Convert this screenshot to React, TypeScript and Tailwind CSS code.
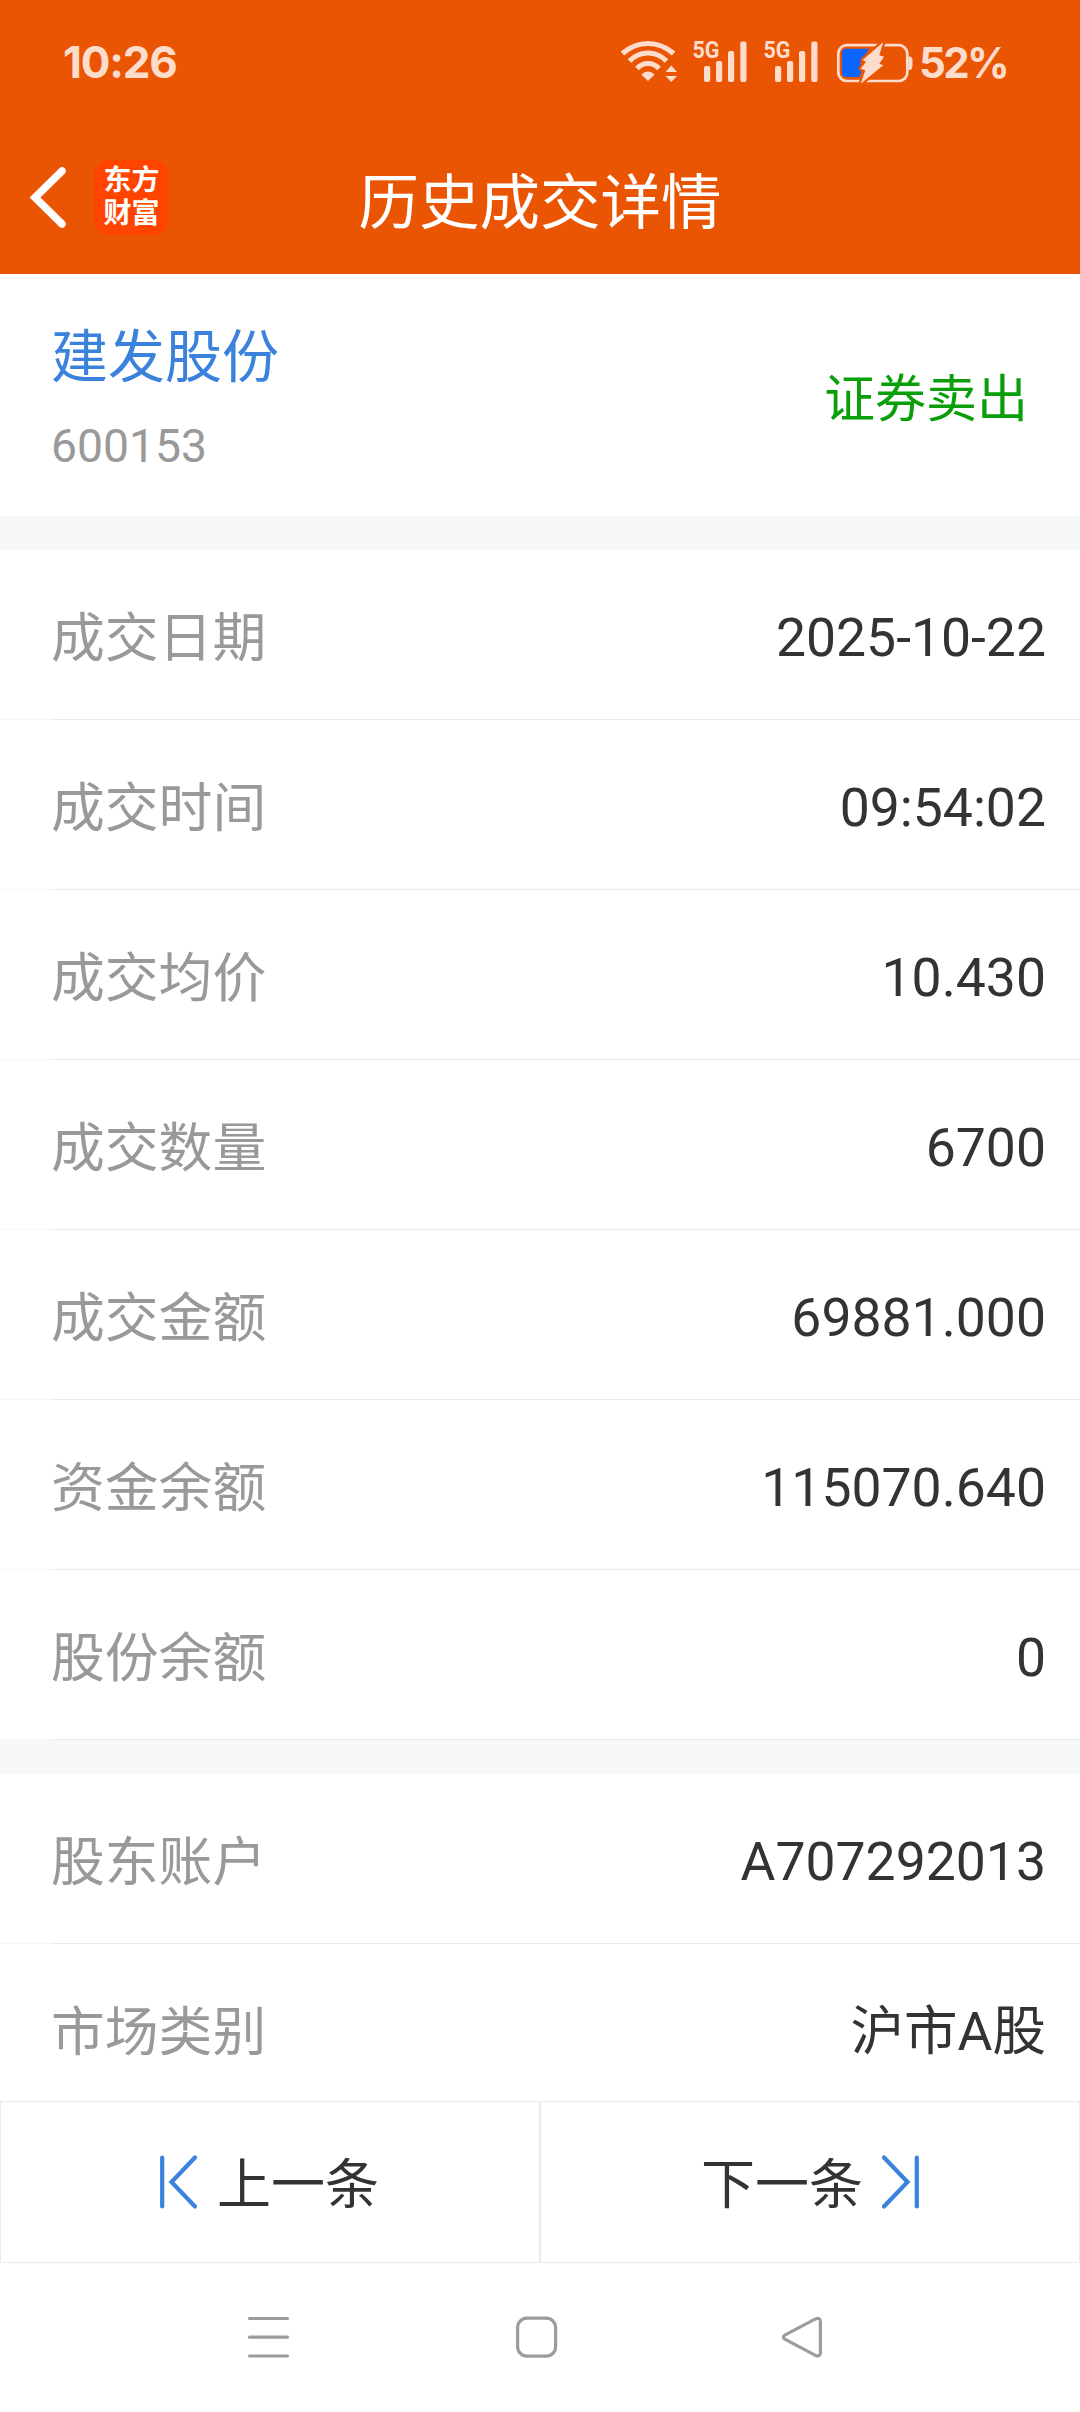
const details = [
  ['成交日期', '2025-10-22'],
  ['成交时间', '09:54:02'],
  ['成交均价', '10.430'],
  ['成交数量', '6700'],
  ['成交金额', '69881.000'],
  ['资金余额', '115070.640'],
  ['股份余额', '0'],
];

function Row({ label, value }: { label: string; value: string }) {
  return (
    <div className="relative flex h-[170px] shrink-0 items-start justify-between bg-white pl-[51px] pr-[34px] text-[53.5px] leading-[80px]">
      <span className="pt-[49px] text-[53.8px] text-[#999999]">{label}</span>
      <span className="pt-[48px] text-[#333333]">{value}</span>
      <div className="absolute bottom-0 left-0 h-px w-[51px] bg-[#f7f7f7]" />
      <div className="absolute right-0 bottom-0 left-[51px] h-px bg-[#ebebeb]" />
    </div>
  );
}

function Signal({ x }: { x: number }) {
  return (
    <g transform={`translate(${x} 0)`}>
      <text x="-0.5" y="19" fontSize="24" fontWeight="700" textLength="27" lengthAdjust="spacingAndGlyphs" fontFamily="Roboto, sans-serif">5G</text>
      <rect x="11" y="27" width="6.2" height="16" rx="2" />
      <rect x="23" y="22" width="6.2" height="21" rx="2" />
      <rect x="35" y="12" width="6.2" height="31" rx="2" />
      <rect x="47.3" y="2.5" width="6.2" height="40.5" rx="2" />
    </g>
  );
}

function StatusIcons() {
  return (
    <svg width="294" height="66" viewBox="0 -10 294 66" fill="#fddccb">
      <g fill="none" stroke="#fddccb" strokeWidth="5.2">
        <path d="M2.4 14.5Q14 4.5 28 4.5T53.6 14.5" />
        <path d="M9.5 22Q17.5 14 28 14T46.5 22" />
        <path d="M17 29.5Q21.5 24.5 28 24.5T39 29.5" />
      </g>
      <path d="M21.3 35.5Q28 29.5 34.7 35.5L28 42Z" />
      <path d="M51.3 26.5L57 33H45.6ZM45.6 37H57L51.3 43Z" />
      <Signal x={73} />
      <Signal x={144} />
      <rect x="218.3" y="6.2" width="69" height="35.8" rx="8.5" fill="none" stroke="#fddccb" strokeWidth="2.7" />
      <path d="M288.5 17.5H290Q292.5 18 292.5 21V27Q292.5 30 290 31H288.5Z" />
      <path d="M226 9.8H249L240 24L243 30L239 38H226Q222 38 222 34V13.8Q222 9.8 226 9.8Z" fill="#0a66ff" />
      <path d="M263.3 3L242.7 21L246 22.7L240.7 29.7L245.3 31.3L240.7 44.7L263.3 26.3L259.3 24.7L264 17.7L259.3 16.3Z" fill="#fddccb" stroke="#ea5504" strokeWidth="4.5" paintOrder="stroke" strokeLinejoin="round" />
    </svg>
  );
}

function StepIcon({ flip = false }: { flip?: boolean }) {
  return (
    <svg width="38" height="54" viewBox="0 0 38 54" className={flip ? 'rotate-180' : ''} fill="none" stroke="#3a82dc" strokeWidth="4.2" strokeLinecap="round">
      <path d="M3.2 2.5V51.5" />
      <path d="M36 2.5L12.5 27L36 51.5" strokeLinejoin="miter" />
    </svg>
  );
}

export default function App() {
  return (
    <div className="flex h-[2412px] w-[1080px] flex-col overflow-hidden bg-white font-['Roboto','Noto_Sans_CJK_SC',sans-serif]">
      <header className="flex h-[274px] shrink-0 flex-col bg-[#ea5504]">
        <div className="flex h-[124px] items-center pl-[63px] font-['Inter',sans-serif] text-[#fddccb]">
          <span className="w-[557px] text-[44px] leading-[60px] font-bold tracking-[-1.2px]">10:26</span>
          <StatusIcons />
          <span className="ml-[5px] pt-[2px] text-[42px] leading-[60px] font-bold tracking-[-2.6px]">52%</span>
        </div>
        <div className="relative flex h-[150px] items-start pt-[36px] pl-[29px] text-white">
          <svg width="39" height="75" viewBox="0 0 39 75" fill="none" stroke="#fff" strokeWidth="7.5" strokeLinecap="round">
            <path d="M33 11L6 37.5L33 64" />
          </svg>
          <div className="ml-[26px] flex h-[75px] w-[75px] flex-col items-center justify-center rounded-[16px] bg-[#ff4400] pb-[2px] text-[28px] leading-[33px] font-bold">
            <span>东方</span>
            <span>财富</span>
          </div>
          <h1 className="absolute inset-x-0 top-[35px] text-center text-[60.5px] leading-[90px] font-normal">历史成交详情</h1>
        </div>
      </header>

      <section className="flex h-[242px] shrink-0 items-start justify-between pr-[52px] pl-[51px]">
        <div className="flex flex-col pt-[42px]">
          <span className="text-[57px] leading-[84px] text-[#3a82dc]">建发股份</span>
          <span className="mt-[11px] text-[46.3px] leading-[70px] text-[#999999]">600153</span>
        </div>
        <span className="pt-[88px] text-[51px] leading-[76px] text-[#0a9f0a]">证券卖出</span>
      </section>

      <div className="h-[34px] shrink-0 bg-[#f7f8fa]" />
      {details.map(([label, value]) => (
        <Row key={label} label={label} value={value} />
      ))}
      <div className="h-[34px] shrink-0 bg-[#f7f8fa]" />
      <div className="h-[327px] shrink-0 overflow-hidden">
        <Row label="股东账户" value="A707292013" />
        <Row label="市场类别" value="沪市A股" />
      </div>

      <div className="grid h-[162px] shrink-0 grid-cols-2 text-[54px] leading-[80px] text-[#333333]">
        <button className="flex items-center border border-[#ebebeb] pl-[158px]">
          <StepIcon />
          <span className="ml-[20px] pt-[8px]">上一条</span>
        </button>
        <button className="flex items-center border border-[#ebebeb] pl-[160px]">
          <span className="mr-[19px] pt-[8px]">下一条</span>
          <StepIcon flip />
        </button>
      </div>

      <nav className="flex flex-1 items-start pt-[52px] pl-[247px]">
        <svg width="43" height="43" viewBox="0 0 43 43" stroke="#9c9c9c" strokeWidth="3.2" strokeLinecap="round">
          <path d="M2.5 3.5H40.5M2.5 22.2H40.5M2.5 41H40.5" />
        </svg>
        <svg width="43" height="43" viewBox="0 0 43 43" fill="none" stroke="#9c9c9c" strokeWidth="3.2" className="ml-[225px]">
          <rect x="2.6" y="3.2" width="38" height="38" rx="9.5" />
        </svg>
        <svg width="43" height="43" viewBox="0 0 43 43" fill="none" stroke="#9c9c9c" strokeWidth="3.2" strokeLinejoin="round" className="ml-[223px]">
          <path d="M34 4.2Q39.4 1.8 39.4 7V37.4Q39.4 42.6 34 40.2L3.8 24.2Q1 22.2 3.8 20.2Z" />
        </svg>
      </nav>
    </div>
  );
}
